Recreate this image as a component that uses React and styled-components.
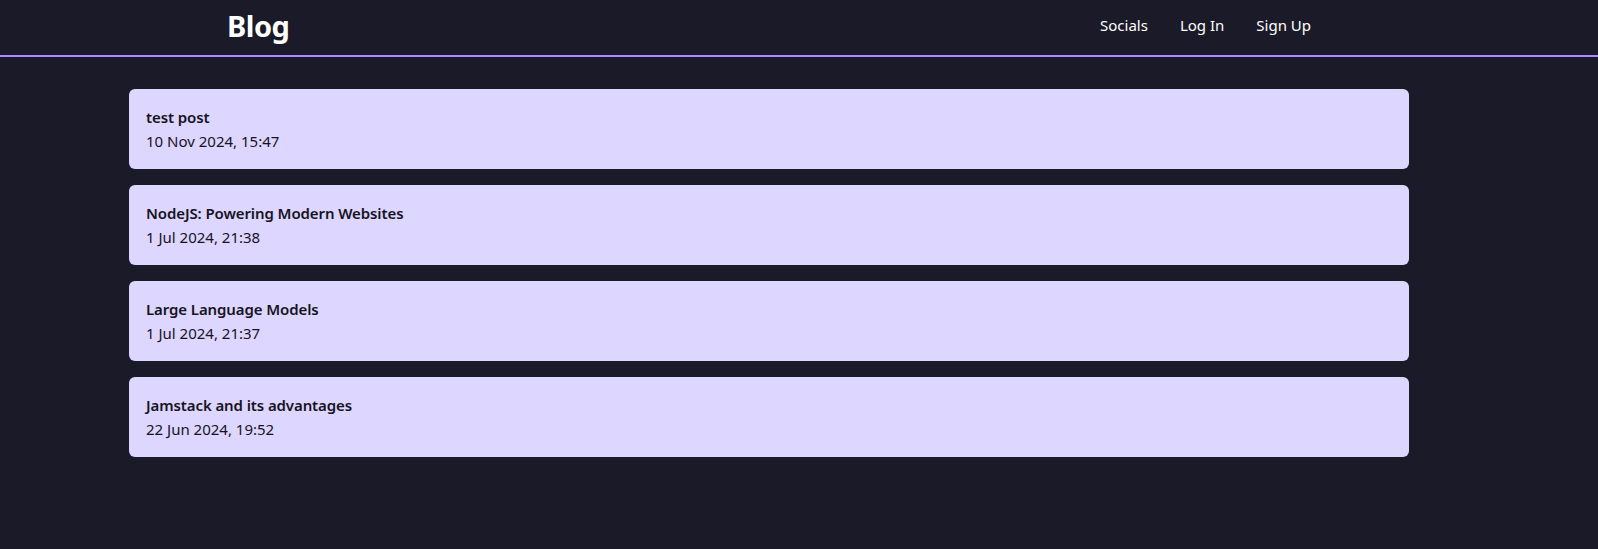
import React from 'react'
import styled, { createGlobalStyle } from 'styled-components'

const GlobalStyle = createGlobalStyle`
    body {
        margin: 0;
        background-color: #1b1a28;
        font-family: "Noto Sans", "Open Sans", sans-serif;
    }
`

const Page = styled.div`
    min-height: 549px;
    background-color: #1b1a28;
`

const Header = styled.header`
    height: 50px;
    border-bottom: 2px solid #a78bfa;
    display: flex;
    align-items: center;
    justify-content: space-between;
    padding: 0 287px 5px 227px;
`

const Logo = styled.h1`
    margin: 0;
    font-size: 29px;
    font-weight: 700;
    color: #fff;
    letter-spacing: -0.5px;
`

const Nav = styled.nav`
    display: flex;
    gap: 32px;
`

const NavLink = styled.a`
    color: #fff;
    font-size: 15px;
    text-decoration: none;
`

const PostList = styled.main`
    display: flex;
    flex-direction: column;
    gap: 16px;
    width: 1280px;
    margin: 32px 0 0 129px;
`

const PostCard = styled.div`
    background-color: #ddd6fe;
    border-radius: 6px;
    padding: 16px 17px;
    height: 48px;
    color: #16141f;
`

const PostTitle = styled.div`
    font-size: 15px;
    font-weight: 600;
    line-height: 24px;
    letter-spacing: -0.1px;
`

const PostDate = styled.div`
    font-size: 15px;
    line-height: 24px;
`

const posts = [
    { title: 'test post', date: '10 Nov 2024, 15:47' },
    { title: 'NodeJS: Powering Modern Websites', date: '1 Jul 2024, 21:38' },
    { title: 'Large Language Models', date: '1 Jul 2024, 21:37' },
    { title: 'Jamstack and its advantages', date: '22 Jun 2024, 19:52' },
]

const App = () => {
    return (
        <Page>
            <GlobalStyle />
            <Header>
                <Logo>Blog</Logo>
                <Nav>
                    <NavLink href="#">Socials</NavLink>
                    <NavLink href="#">Log In</NavLink>
                    <NavLink href="#">Sign Up</NavLink>
                </Nav>
            </Header>
            <PostList>
                {posts.map(post => (
                    <PostCard key={post.title}>
                        <PostTitle>{post.title}</PostTitle>
                        <PostDate>{post.date}</PostDate>
                    </PostCard>
                ))}
            </PostList>
        </Page>
    )
}

export default App
